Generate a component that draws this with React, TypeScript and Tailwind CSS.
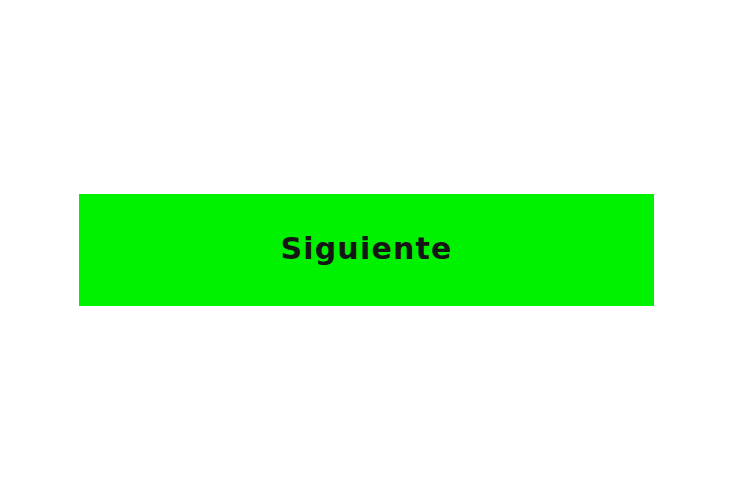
export default function App() {
  return (
    <div className="flex h-[500px] w-full items-center bg-white pl-[79px]">
      <button
        type="button"
        className="flex h-[112px] w-[575px] items-center justify-center bg-[#00f200] pb-[3px] text-[30px] font-bold tracking-[1.2px] text-[#151515]"
        style={{ fontFamily: '"DejaVu Sans", sans-serif' }}
      >
        Siguiente
      </button>
    </div>
  );
}
